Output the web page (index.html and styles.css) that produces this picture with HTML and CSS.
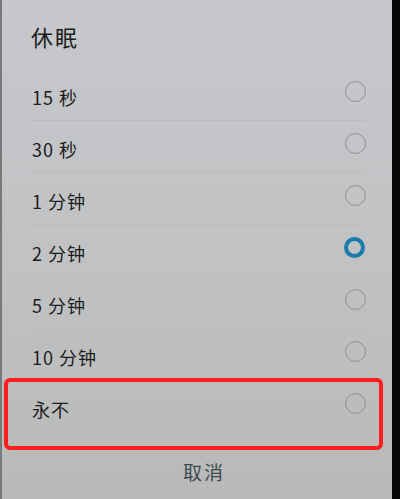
FILE: index.html
```html
<!DOCTYPE html>
<html lang="zh-CN">
<head>
    <meta charset="UTF-8">
    <meta name="viewport" content="width=device-width, initial-scale=1.0">
    <title>休眠</title>
    <link rel="stylesheet" href="styles.css">
</head>
<body>
    <div class="screen">
        <div class="dialog">
            <div class="title">休眠</div>
            <ul class="options">
                <li class="option"><span>15 秒</span><i class="radio"></i></li>
                <li class="option"><span>30 秒</span><i class="radio"></i></li>
                <li class="option"><span>1 分钟</span><i class="radio"></i></li>
                <li class="option"><span>2 分钟</span><i class="radio checked"></i></li>
                <li class="option"><span>5 分钟</span><i class="radio"></i></li>
                <li class="option"><span>10 分钟</span><i class="radio"></i></li>
                <li class="option marked"><span>永不</span><i class="radio"></i></li>
            </ul>
            <div class="cancel">取消</div>
        </div>
    </div>
    <div class="bezel"></div>
</body>
</html>
```

FILE: styles.css
```css
html, body { margin: 0; padding: 0; }
body {
    display: flex;
    width: 400px;
    height: 499px;
    overflow: hidden;
    background: #0b0b0b;
    font-family: "Noto Sans CJK SC", "Noto Sans", sans-serif;
    color: #1b1c1d;
}
.screen {
    width: 390px;
    height: 499px;
    border-left: 2px solid #77797b;
    background: linear-gradient(180deg, #c6c8cb 0%, #c0c2c4 50%, #b9b9b8 100%);
}
.dialog { display: flex; flex-direction: column; }
.title {
    height: 72px;
    margin-top: -4px;
    padding-left: 29px;
    font-size: 22px;
    line-height: 80px;
    letter-spacing: 2px;
}
.options { list-style: none; margin: 0; padding: 0; }
.option {
    position: relative;
    display: flex;
    align-items: center;
    justify-content: space-between;
    height: 51px;
    margin: 0 26px 0 30px;
    border-top: 1px solid #babcbe;
    font-size: 18px;
    letter-spacing: 1px;
}
.option:first-child { border-top-color: transparent; }
.option span { padding-top: 4px; }
.radio {
    width: 19px;
    height: 19px;
    border: 1.5px solid #8c8e90;
    border-radius: 50%;
    margin-top: -6px;
}
.radio.checked {
    width: 13px;
    height: 13px;
    border: 4.5px solid #1a7cac;
    margin-right: 1px;
}
.marked { border-top-color: transparent; }
.marked::after {
    content: "";
    position: absolute;
    left: -28px;
    right: -17px;
    top: -3px;
    bottom: -18px;
    border: 4.5px solid #fb1e1c;
    border-radius: 6px;
}
.cancel {
    margin-top: 26px;
    text-align: center;
    font-size: 19px;
    color: #3c4b52;
    letter-spacing: 2px;
    padding-left: 14px;
}
.bezel { flex: 1; background: #060606; }
```
